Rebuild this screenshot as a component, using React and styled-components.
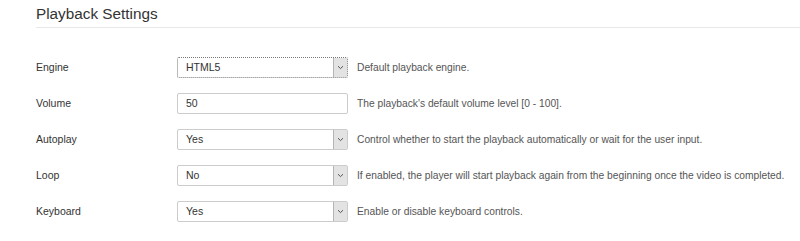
import React from "react";
import styled, { createGlobalStyle } from "styled-components";

const Global = createGlobalStyle`
  html, body { margin: 0; padding: 0; background: #fff; }
  body { font-family: "Liberation Sans", Arial, sans-serif; color: #333; }
`;

const Page = styled.div`
  padding: 0 0 0 36px;
  width: 800px;
  box-sizing: border-box;
`;

const Header = styled.h2`
  margin: 0;
  padding: 5px 0 4px;
  font-size: 15.3px;
  line-height: 18px;
  font-weight: normal;
  color: #333;
  border-bottom: 1px solid #e8e8e8;
`;

const Form = styled.div`
  padding-top: 21px;
  display: flex;
  flex-direction: column;
`;

const Row = styled.div`
  display: grid;
  grid-template-columns: 141px 171px auto;
  align-items: center;
  height: 36px;
`;

const Label = styled.label`
  font-size: 10.5px;
  color: #333;
`;

const Help = styled.span`
  margin-left: 9px;
  font-size: 10.25px;
  color: #555;
  white-space: nowrap;
`;

const Box = styled.div`
  box-sizing: border-box;
  height: 21px;
  border: 1px ${(p) => (p.$focused ? "dotted #777" : "solid #ccc")};
  border-radius: 2px;
  background: #fff;
  display: flex;
  align-items: stretch;
  font-size: 10.5px;
  color: #333;
`;

const Value = styled.span`
  flex: 1;
  display: flex;
  align-items: center;
  padding-left: 8px;
`;

const Arrow = styled.span`
  width: 13px;
  border-left: 1px solid #b5b5b5;
  background: #e3e3e3;
  display: flex;
  align-items: center;
  justify-content: center;
`;

const Chevron = () => (
  <svg width="7" height="5" viewBox="0 0 7 5">
    <path d="M1 1.2 L3.5 3.6 L6 1.2" fill="none" stroke="#555" strokeWidth="1" />
  </svg>
);

const Select = ({ value, focused }) => (
  <Box $focused={focused}>
    <Value>{value}</Value>
    <Arrow>
      <Chevron />
    </Arrow>
  </Box>
);

const Input = ({ value }) => (
  <Box>
    <Value>{value}</Value>
  </Box>
);

const rows = [
  { label: "Engine", kind: "select", value: "HTML5", focused: true, help: "Default playback engine." },
  { label: "Volume", kind: "input", value: "50", help: "The playback's default volume level [0 - 100]." },
  { label: "Autoplay", kind: "select", value: "Yes", help: "Control whether to start the playback automatically or wait for the user input." },
  { label: "Loop", kind: "select", value: "No", help: "If enabled, the player will start playback again from the beginning once the video is completed." },
  { label: "Keyboard", kind: "select", value: "Yes", help: "Enable or disable keyboard controls." },
];

export default function App() {
  return (
    <>
      <Global />
      <Page>
        <Header>Playback Settings</Header>
        <Form>
          {rows.map((r) => (
            <Row key={r.label}>
              <Label>{r.label}</Label>
              {r.kind === "select" ? (
                <Select value={r.value} focused={r.focused} />
              ) : (
                <Input value={r.value} />
              )}
              <Help>{r.help}</Help>
            </Row>
          ))}
        </Form>
      </Page>
    </>
  );
}
